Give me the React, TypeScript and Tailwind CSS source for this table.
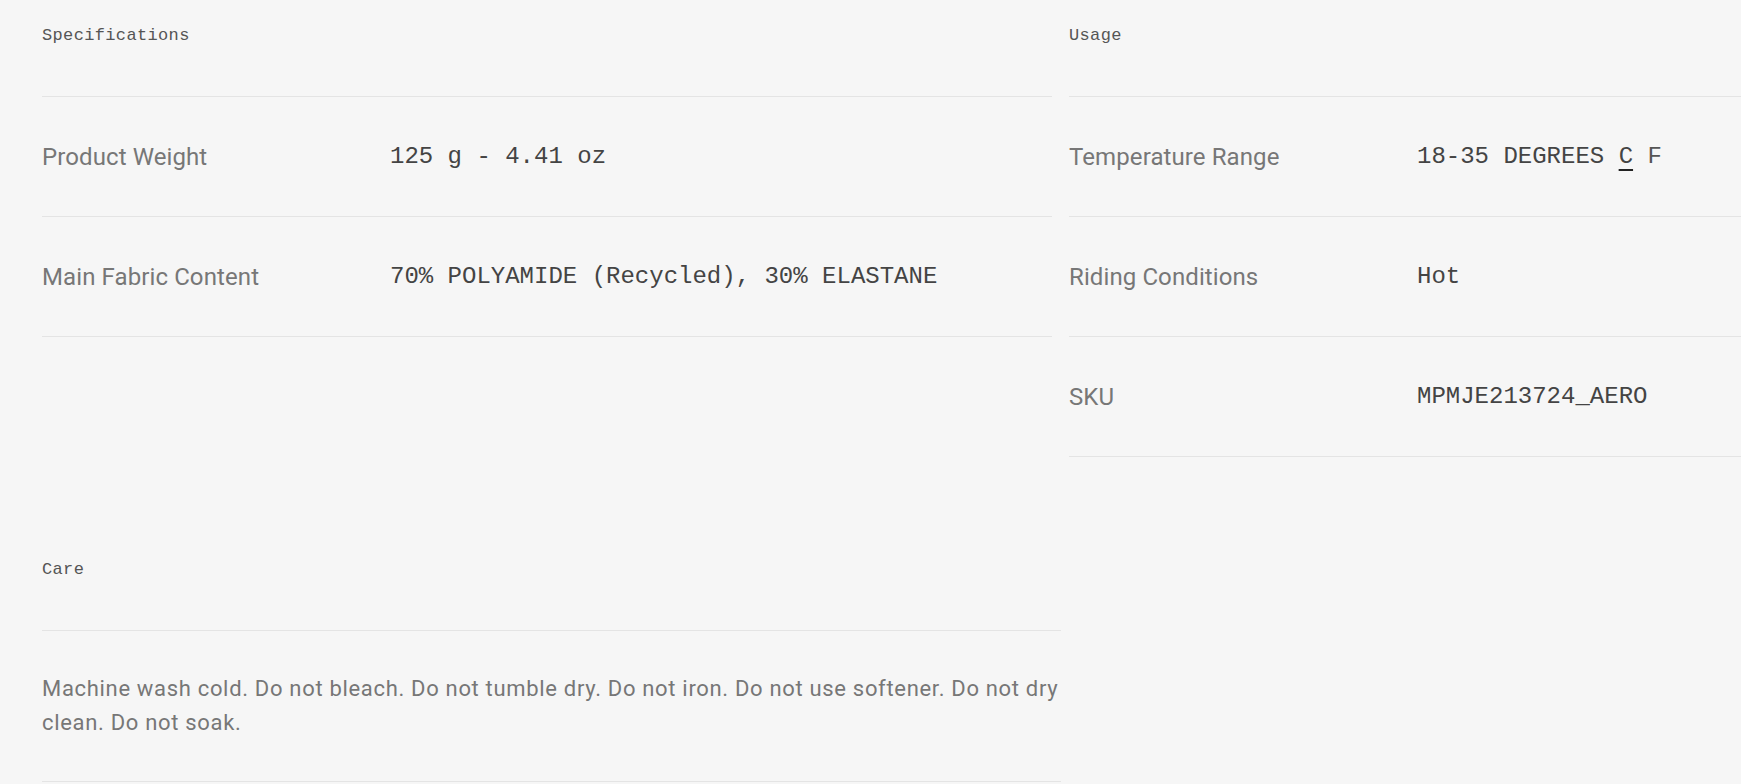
import React from "react";

type Row = { label: string; value: React.ReactNode };

const specs: Row[] = [
  { label: "Product Weight", value: "125 g - 4.41 oz" },
  { label: "Main Fabric Content", value: "70% POLYAMIDE (Recycled), 30% ELASTANE" },
];

const usage: Row[] = [
  {
    label: "Temperature Range",
    value: (
      <>
        18-35 DEGREES{" "}
        <button className="underline decoration-2 underline-offset-[6px] decoration-[#222]">C</button>{" "}
        <button className="text-[#555]">F</button>
      </>
    ),
  },
  { label: "Riding Conditions", value: "Hot" },
  { label: "SKU", value: "MPMJE213724_AERO" },
];

function SectionTitle({ children }: { children: React.ReactNode }) {
  return (
    <div className="h-[97px] border-b border-[#e4e4e4] pt-[24px]">
      <h3 className="font-['Liberation_Mono',monospace] text-[17px] leading-[24px] tracking-[0.35px] text-[#555]">
        {children}
      </h3>
    </div>
  );
}

function Table({ title, rows }: { title: string; rows: Row[] }) {
  return (
    <div className="w-[1010px] shrink-0">
      <SectionTitle>{title}</SectionTitle>
      {rows.map((row) => (
        <div key={row.label} className="flex h-[120px] items-center border-b border-[#e4e4e4]">
          <span className="w-[348px] shrink-0 font-['Roboto',sans-serif] text-[24px] tracking-[0.1px] text-[#777]">
            {row.label}
          </span>
          <span className="font-['Liberation_Mono',monospace] text-[24px] text-[#444]">{row.value}</span>
        </div>
      ))}
    </div>
  );
}

export default function App() {
  return (
    <div className="h-[784px] w-full overflow-hidden bg-[#f6f6f6] px-[42px]">
      <div className="flex gap-[17px]">
        <Table title="Specifications" rows={specs} />
        <Table title="Usage" rows={usage} />
      </div>

      <div className="mt-[77px] w-[1019px]">
        <SectionTitle>Care</SectionTitle>
        <p className="border-b border-[#e4e4e4] py-[41px] font-['Roboto',sans-serif] text-[22px] leading-[34px] tracking-[0.68px] text-[#777]">
          Machine wash cold. Do not bleach. Do not tumble dry. Do not iron. Do not use softener. Do not dry clean. Do
          not soak.
        </p>
      </div>
    </div>
  );
}
